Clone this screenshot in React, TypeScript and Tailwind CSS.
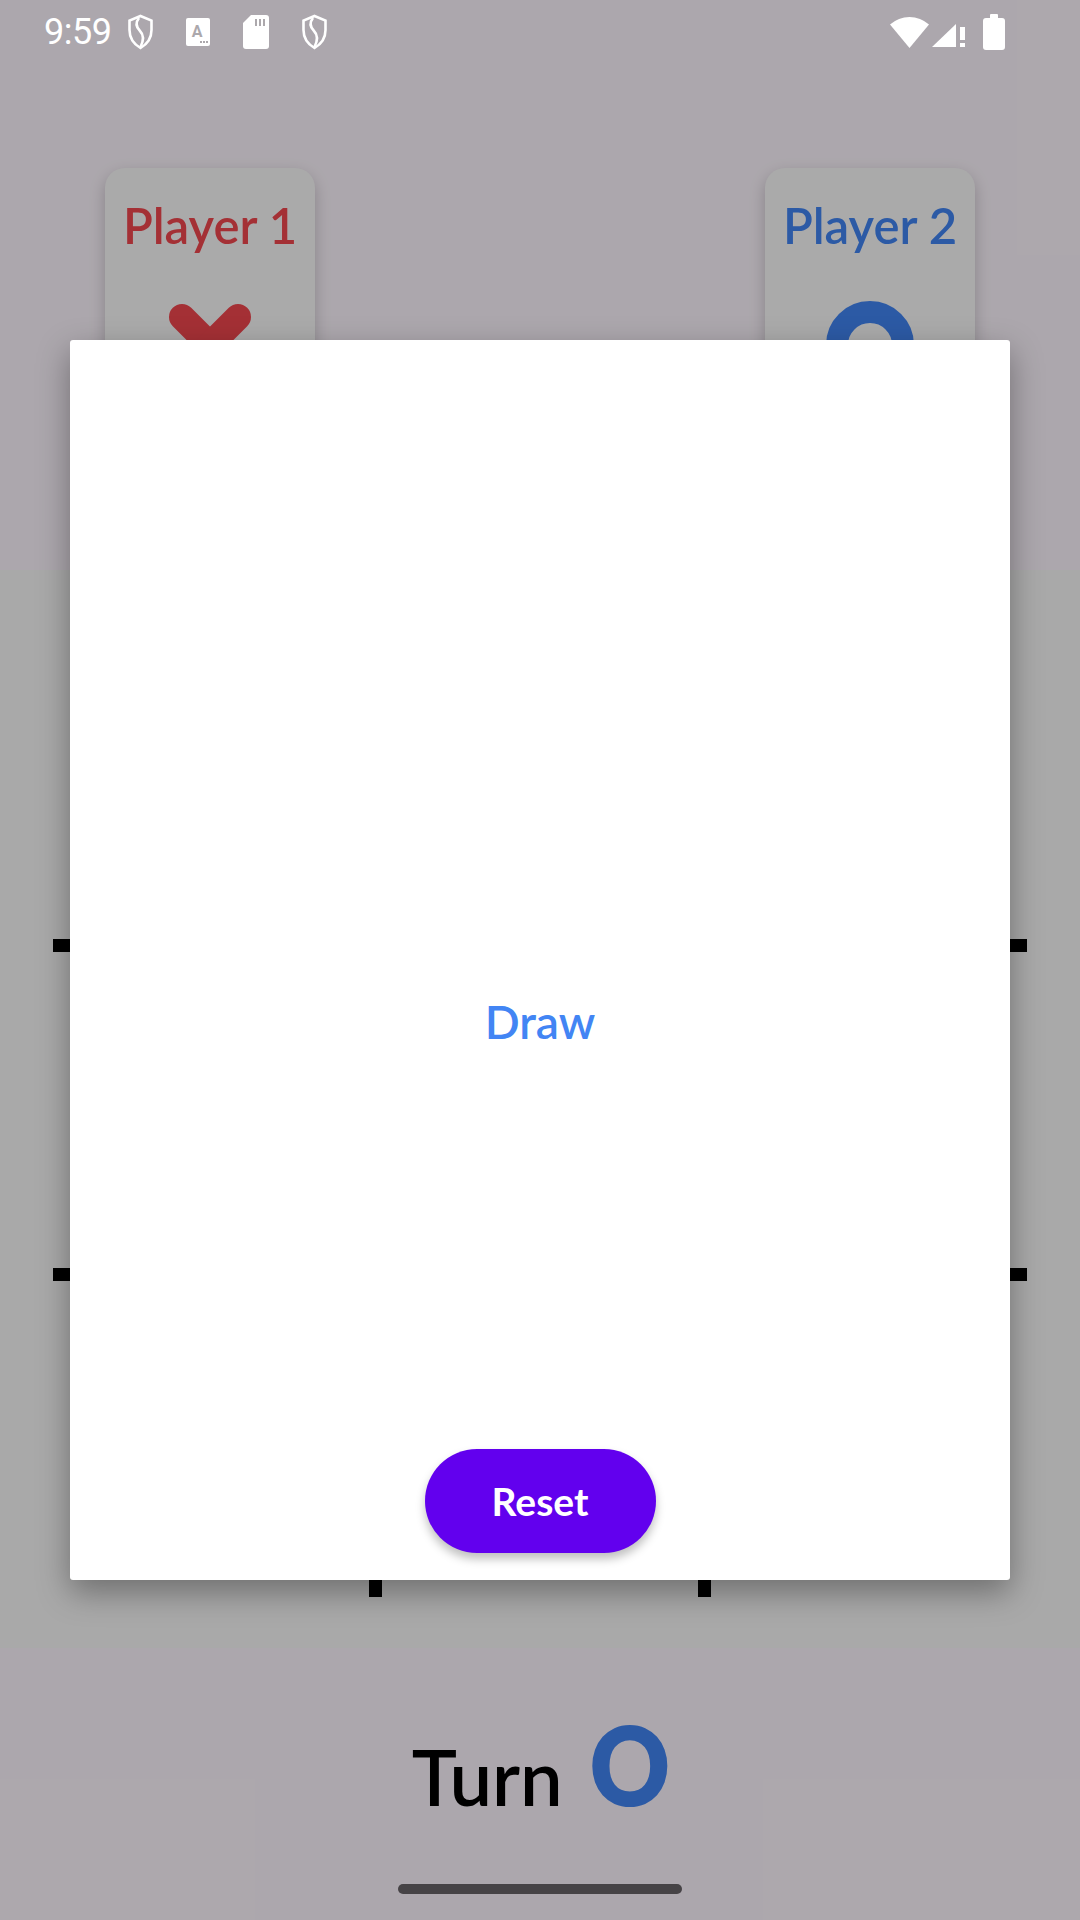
import React from "react";

const FONT = "font-['Lato','Noto_Sans',sans-serif]";

function StatusBar() {
  return (
    <div className="absolute top-0 inset-x-0 h-[63px] flex items-center text-white z-20">
      <span className="ml-[44px] text-[36px] leading-none font-['Roboto',sans-serif] tracking-[-0.5px]">9:59</span>
      <svg className="ml-[16px]" width="27" height="36" viewBox="0 0 27 36" fill="none" stroke="white" strokeWidth="2.6">
        <path d="M13.5 2 L24.5 6.5 V16 C24.5 24 19.5 30.5 13.5 34 C7.5 30.5 2.5 24 2.5 16 V6.5 Z" />
        <path d="M12 4 C8 9 9 13 13 17 C17 21 17 26 13.5 33" />
      </svg>
      <svg className="ml-[32px]" width="24" height="28" viewBox="0 0 24 28">
        <rect x="0" y="0" width="24" height="28" rx="2" fill="white" />
        <text x="11" y="19" fontSize="16" fontWeight="700" textAnchor="middle" fill="#aca8ac" fontFamily="Roboto, sans-serif">A</text>
        <rect x="14" y="23" width="2" height="2" fill="#aca8ac" />
        <rect x="17" y="23" width="2" height="2" fill="#aca8ac" />
        <rect x="20" y="23" width="2" height="2" fill="#aca8ac" />
      </svg>
      <svg className="ml-[33px]" width="26" height="34" viewBox="0 0 26 34">
        <path d="M8 0 H23 a3 3 0 0 1 3 3 V31 a3 3 0 0 1 -3 3 H3 a3 3 0 0 1 -3 -3 V8 Z" fill="white" />
        <rect x="12" y="4" width="2" height="7" fill="#aca8ac" />
        <rect x="16" y="4" width="2" height="7" fill="#aca8ac" />
        <rect x="20" y="4" width="2" height="7" fill="#aca8ac" />
      </svg>
      <svg className="ml-[32px]" width="27" height="36" viewBox="0 0 27 36" fill="none" stroke="white" strokeWidth="2.6">
        <path d="M13.5 2 L24.5 6.5 V16 C24.5 24 19.5 30.5 13.5 34 C7.5 30.5 2.5 24 2.5 16 V6.5 Z" />
        <path d="M12 4 C8 9 9 13 13 17 C17 21 17 26 13.5 33" />
      </svg>

      <div className="flex-1" />

      <svg width="41" height="34" viewBox="0 0 41 34">
        <path d="M20.5 33 L1 9.5 A29 29 0 0 1 40 9.5 Z" fill="white" />
      </svg>
      <svg className="ml-[2px]" width="34" height="33" viewBox="0 0 34 33">
        <polygon points="0,32 24,9 24,32" fill="white" />
        <rect x="28" y="12" width="5" height="13" fill="white" />
        <rect x="28" y="28" width="5" height="4" fill="white" />
      </svg>
      <svg className="ml-[17px] mr-[75px]" width="22" height="36" viewBox="0 0 22 36">
        <rect x="7" y="0" width="8" height="5" rx="1" fill="white" />
        <rect x="0" y="4" width="22" height="32" rx="3" fill="white" />
      </svg>
    </div>
  );
}

function XMark() {
  return (
    <svg width="92" height="92" viewBox="0 0 92 92" stroke="#F2474F" strokeWidth="26" strokeLinecap="round">
      <line x1="18" y1="18" x2="74" y2="74" />
      <line x1="74" y1="18" x2="18" y2="74" />
    </svg>
  );
}

function OMark() {
  return (
    <svg width="92" height="92" viewBox="0 0 92 92" fill="none" stroke="#4285F4" strokeWidth="22">
      <circle cx="46" cy="46" r="33" />
    </svg>
  );
}

function PlayerCard({ label, color, mark }: { label: string; color: string; mark: React.ReactNode }) {
  return (
    <div className="w-[210px] h-[310px] rounded-[20px] bg-[#FBFBFB] shadow-[0_6px_16px_rgba(0,0,0,0.22)] flex flex-col items-center pt-[33px]">
      <span className={`text-[49px] leading-none font-semibold whitespace-nowrap ${color}`}>{label}</span>
      <div className="mt-[49px]">{mark}</div>
    </div>
  );
}

export default function App() {
  return (
    <div className={`relative w-[1080px] h-[1920px] overflow-hidden bg-[#FEF7FF] ${FONT}`}>
      {/* game screen */}
      <div className="flex flex-col h-full">
        <div className="h-[570px] flex justify-between px-[105px] pt-[168px]">
          <PlayerCard label="Player 1" color="text-[#F2474F]" mark={<XMark />} />
          <PlayerCard label="Player 2" color="text-[#4285F4]" mark={<OMark />} />
        </div>

        <div className="h-[1078px] bg-[#FAFAFA] p-[53px]">
          <div className="grid grid-cols-3 gap-[13px] bg-black w-[974px] h-[974px]">
            {Array.from({ length: 9 }).map((_, i) => (
              <div key={i} className="bg-[#FAFAFA]" />
            ))}
          </div>
        </div>

        <div className="flex-1 flex justify-center items-start pt-[60px]">
          <div className="flex items-baseline gap-[22px] pl-[6px]">
            <span className="text-[76px] leading-none font-semibold text-black">Turn</span>
            <span className="text-[110px] leading-none font-extrabold text-[#4285F4] scale-x-[0.9]">O</span>
          </div>
        </div>
      </div>

      {/* dialog */}
      <div className="absolute inset-0 bg-black/[0.32] flex items-center justify-center z-10">
        <div className="w-[940px] h-[1240px] bg-white rounded-[3px] shadow-[0_12px_32px_rgba(0,0,0,0.35)] flex flex-col items-center pb-[27px]">
          <div className="flex-1 flex items-center justify-center pt-[255px]">
            <span className="text-[46px] leading-none font-semibold text-[#4285F4]">Draw</span>
          </div>
          <button className="w-[231px] h-[104px] rounded-full bg-[#6200EE] text-white text-[39px] font-bold shadow-[0_6px_10px_rgba(0,0,0,0.25)]">
            Reset
          </button>
        </div>
      </div>

      <StatusBar />
      <div className="absolute bottom-[26px] left-[398px] w-[284px] h-[10px] rounded-full bg-[#464346] z-20" />
    </div>
  );
}
